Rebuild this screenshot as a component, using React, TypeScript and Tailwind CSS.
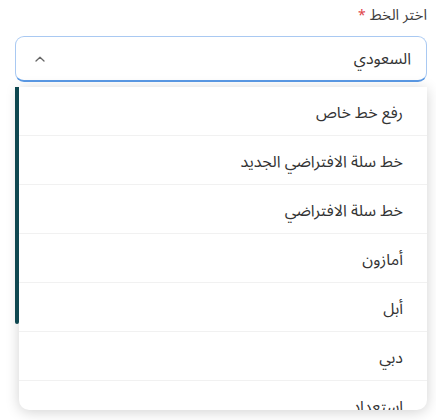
import React from "react";

const items = [
  "رفع خط خاص",
  "خط سلة الافتراضي الجديد",
  "خط سلة الافتراضي",
  "أمازون",
  "أبل",
  "دبي",
  "استعداد",
];

export default function App() {
  return (
    <div
      dir="rtl"
      className="w-[436px] h-[420px] bg-white overflow-hidden relative"
      style={{ fontFamily: '"Noto Sans Arabic", "Noto Sans", "DejaVu Sans", sans-serif' }}
    >
      <div className="pr-[9px] pl-[9px] pt-[3px]">
        <div className="flex items-center gap-1 h-[24px] text-[15px] text-[#3f3f3f]">
          <span>اختر الخط</span>
          <span className="text-[#e0454a] text-[14px]">*</span>
        </div>
        <div className="mt-[9px] ml-[6px] h-[46px] rounded-[9px] border border-[#a9c9f2] border-b-2 border-b-[#5b9ae6] flex items-center justify-between pr-[15px] pl-[18px] text-[16px] text-[#333]">
          <span>السعودي</span>
          <svg width="12" height="8" viewBox="0 0 12 8" fill="none">
            <path d="M2 6L6 2.3L10 6" stroke="#666" strokeWidth="1.3" strokeLinecap="round" strokeLinejoin="round" />
          </svg>
        </div>
        <div className="relative mt-[5px] ml-[6px] h-[323px]">
          <div className="h-full mr-0 ml-[4px] bg-white rounded-b-[10px] shadow-[0_2px_14px_rgba(0,0,0,0.18)] overflow-hidden">
            {items.map((t, i) => (
              <div
                key={i}
                className={`h-[49px] flex items-center pr-[24px] pt-[3px] text-[16px] text-[#333] ${i < items.length - 1 ? "border-b border-[#f1f1f1]" : ""}`}
              >
                {t}
              </div>
            ))}
          </div>
          <div className="absolute left-0 top-0 w-[4px] h-[237px] rounded-b-[2px] bg-[#0e4750]" />
        </div>
      </div>
    </div>
  );
}
